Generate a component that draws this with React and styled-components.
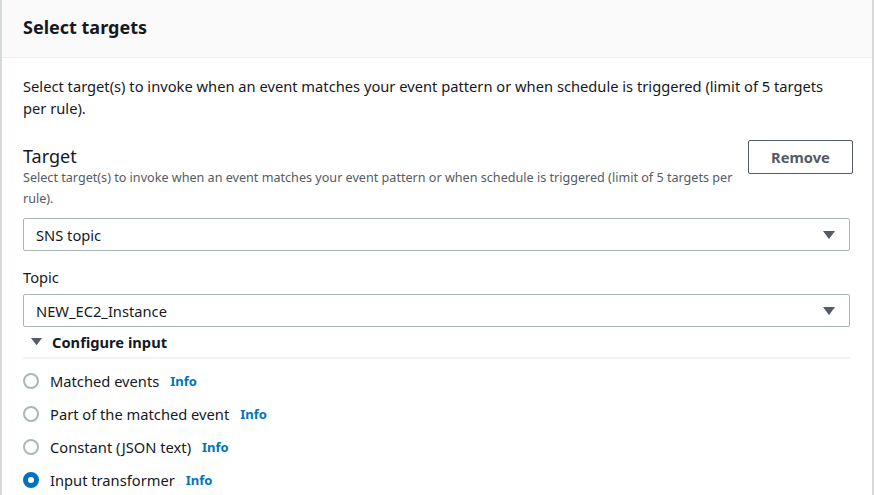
import React from "react";
import styled, { createGlobalStyle } from "styled-components";

const GlobalStyle = createGlobalStyle`
  body {
    margin: 0;
    background: #ffffff;
    font-family: "Noto Sans", "Open Sans", Arial, sans-serif;
    color: #16191f;
  }
`;

const PANEL = styled.div`
  width: 874px;
  height: 495px;
  box-sizing: border-box;
  border-left: 2px solid #d5dbdb;
  border-right: 2px solid #d5dbdb;
  overflow: hidden;
  background: #ffffff;
`;

const HEADER = styled.div`
  height: 58px;
  box-sizing: border-box;
  background: #fafafa;
  border-bottom: 1px solid #eaeded;
  padding: 14px 21px 0;
`;

const TITLE = styled.h2`
  margin: 0;
  font-size: 18px;
  font-weight: 700;
  line-height: 26px;
`;

const BODY = styled.div`
  padding: 17px 22px 0 21px;
`;

const DESCRIPTION = styled.p`
  margin: 0;
  font-size: 14.7px;
  line-height: 22px;
  color: #16191f;
`;

const TARGETHEAD = styled.div`
  display: flex;
  justify-content: space-between;
  align-items: flex-start;
  margin-top: 26px;
`;

const TARGETTEXT = styled.div`
  flex: 1;
  max-width: 720px;
`;

const TARGETTITLE = styled.div`
  font-size: 18px;
  line-height: 22px;
  color: #16191f;
`;

const SMALL = styled.div`
  font-size: 12.6px;
  line-height: 21px;
  color: #545b64;
`;

const BUTTON = styled.button`
  width: 105px;
  height: 34px;
  margin-top: -5px;
  margin-right: -3px;
  background: #ffffff;
  border: 1px solid #545b64;
  border-radius: 2px;
  font-family: inherit;
  font-size: 14.7px;
  font-weight: 700;
  color: #545b64;
`;

const SELECT = styled.div`
  display: flex;
  align-items: center;
  justify-content: space-between;
  height: 33px;
  box-sizing: border-box;
  margin-top: ${(p) => p.$top || 0}px;
  padding: 0 14px 0 12px;
  border: 1px solid #aab7b8;
  border-radius: 2px;
  font-size: 14.7px;
  color: #16191f;
`;

const LABEL = styled.div`
  margin-top: 15px;
  font-size: 14.7px;
  line-height: 22px;
  color: #16191f;
`;

const EXPANDER = styled.div`
  display: flex;
  align-items: center;
  gap: 10px;
  height: 30px;
  padding-left: 8px;
  border-bottom: 2px solid #f2f3f3;
  font-size: 14.7px;
  font-weight: 700;
  color: #16191f;
`;

const RADIOLIST = styled.div`
  display: flex;
  flex-direction: column;
  gap: 11px;
  margin-top: 11px;
`;

const RADIOROW = styled.label`
  display: flex;
  align-items: center;
  height: 22px;
  font-size: 14.7px;
  color: #16191f;
`;

const RADIO = styled.span`
  width: 16px;
  height: 16px;
  box-sizing: border-box;
  border-radius: 50%;
  margin-right: 11px;
  border: ${(p) => (p.$checked ? "5px solid #0073bb" : "2px solid #aab7b8")};
  background: #ffffff;
`;

const INFO = styled.span`
  margin-left: 11px;
  font-size: 13px;
  font-weight: 700;
  color: #0073bb;
`;

const Caret = ({ size = 12 }) => (
  <svg width={size} height={(size * 2) / 3} viewBox="0 0 12 8">
    <path d="M0 0 L12 0 L6 8 Z" fill="#545b64" />
  </svg>
);

const options = [
  { label: "Matched events", checked: false },
  { label: "Part of the matched event", checked: false },
  { label: "Constant (JSON text)", checked: false },
  { label: "Input transformer", checked: true },
];

export default function App() {
  return (
    <>
      <GlobalStyle />
      <PANEL>
        <HEADER>
          <TITLE>Select targets</TITLE>
        </HEADER>
        <BODY>
          <DESCRIPTION>
            Select target(s) to invoke when an event matches your event pattern or when schedule is
            triggered (limit of 5 targets per rule).
          </DESCRIPTION>
          <TARGETHEAD>
            <TARGETTEXT>
              <TARGETTITLE>Target</TARGETTITLE>
              <SMALL>
                Select target(s) to invoke when an event matches your event pattern or when schedule
                is triggered (limit of 5 targets per rule).
              </SMALL>
            </TARGETTEXT>
            <BUTTON>Remove</BUTTON>
          </TARGETHEAD>
          <SELECT $top={9}>
            <span>SNS topic</span>
            <Caret />
          </SELECT>
          <LABEL>Topic</LABEL>
          <SELECT $top={6}>
            <span>NEW_EC2_Instance</span>
            <Caret />
          </SELECT>
          <EXPANDER>
            <Caret size={11} />
            <span>Configure input</span>
          </EXPANDER>
          <RADIOLIST>
            {options.map((o) => (
              <RADIOROW key={o.label}>
                <RADIO $checked={o.checked} />
                {o.label}
                <INFO>Info</INFO>
              </RADIOROW>
            ))}
          </RADIOLIST>
        </BODY>
      </PANEL>
    </>
  );
}
